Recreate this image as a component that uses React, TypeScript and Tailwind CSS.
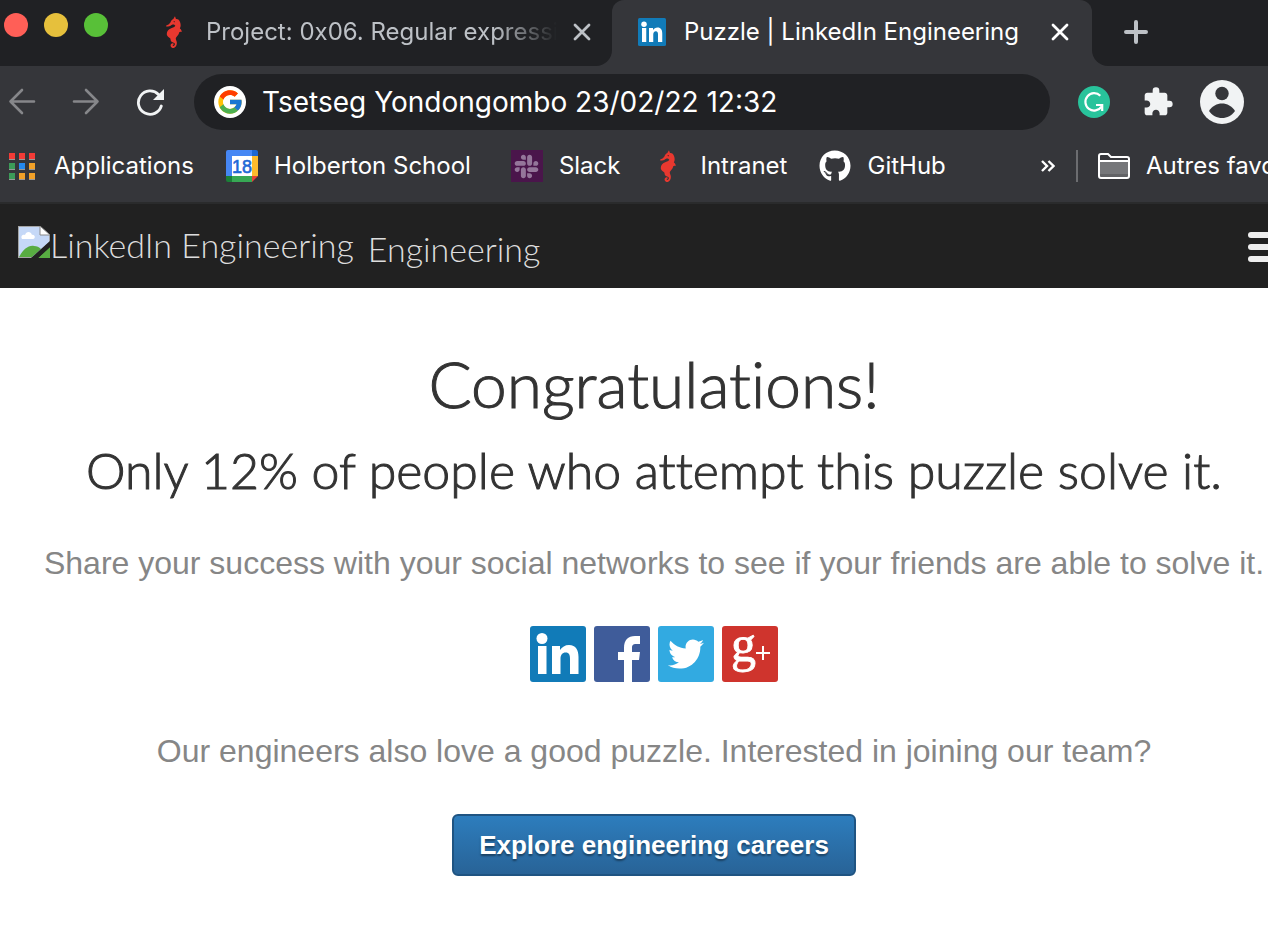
import React from "react";
import { FcGoogle } from "react-icons/fc";
import { FaGithub, FaSlack, FaTwitter } from "react-icons/fa";
import { MdExtension } from "react-icons/md";

function Seahorse() {
  return (
    <svg viewBox="0 0 48 98" className="h-8 w-4 shrink-0" fill="#e8382f" aria-hidden="true">
      <path d="M27 1l3 8c5-1 9 2 11 6 3 5 4 11 3 17l-2 6c3 2 5 5 6 11-4-2-6-1-8 1-1 7-5 10-9 15-3 4-1 6 0 10 3 5 2 13-1 18-3 5-10 7-14 3-4-4-3-10 2-12 3-1 6 1 6 4-2-1-4 0-4 2s3 2 5 0c3-3 2-7-2-8-4-2-8-3-9-7-1-3 0-5-2-7-4-3-9-5-10-11C1 47 7 41 14 38c7-2 13-4 14-8-3-5-7-5-10-3-4 3-9 6-14 5l-3 1-1-4c5-1 10-4 13-9 2-6 5-9 9-11z" />
      <path d="M22 17c2-3 5-2 5 1-1 2-4 2-5-1z" fill="#5b2224" />
    </svg>
  );
}

function LinkedInMark({ className }: { className: string }) {
  return (
    <svg viewBox="0 0 56 56" className={className} aria-hidden="true">
      <rect width="56" height="56" rx="3" fill="#117bb8" />
      <g fill="#fff">
        <circle cx="12" cy="12.500" r="5.500" />
        <path d="M8 20h8.500v28H8zM22 20h8v4c2-3 5-5 9-5 7 0 9.500 5 9.500 12v17H40V33c0-4-.8-6.500-4.300-6.500S30.500 29 30.500 33v15H22z" />
      </g>
    </svg>
  );
}

function Cross({ className }: { className: string }) {
  return (
    <svg viewBox="0 0 18 18" className={className} fill="none" stroke="currentColor" strokeWidth="2.800" strokeLinecap="round" aria-hidden="true">
      <path d="M2 2l14 14M16 2L2 16" />
    </svg>
  );
}

function AppsIcon() {
  const colors = ["#f23b36", "#f23b36", "#f23b36", "#3b9b58", "#2489ee", "#f0a028", "#3b9b58", "#f0a028", "#f0a028"];
  return (
    <svg viewBox="0 0 26 27" className="h-[27px] w-[26px]" aria-hidden="true">
      {colors.map((c, i) => (
        <g key={i}>
          <rect x={(i % 3) * 10} y={Math.floor(i / 3) * 10} width="6" height="7" fill="#9a9a9a" />
          <rect x={(i % 3) * 10} y={Math.floor(i / 3) * 10} width="6" height="6" fill={c} />
        </g>
      ))}
    </svg>
  );
}

function CalendarIcon() {
  return (
    <svg viewBox="0 0 32 32" className="size-8" aria-hidden="true">
      <path d="M2 0h24v6H6v20H0V2a2 2 0 012-2z" fill="#4687f4" />
      <path d="M26 0h4a2 2 0 012 2v4h-6z" fill="#1c67d2" />
      <path d="M26 6h6v20h-6z" fill="#fcbb2d" />
      <path d="M6 26h20v6H6z" fill="#37a854" />
      <path d="M0 26h6v6H2a2 2 0 01-2-2z" fill="#1b8038" />
      <path d="M26 26h6l-6 6z" fill="#e94335" />
      <path d="M6 6h20v20H6z" fill="#fff" />
      <text x="16" y="22.500" textAnchor="middle" fontSize="18" fill="#1f69d6" stroke="#1f69d6" strokeWidth=".6" fontFamily="Liberation Sans, sans-serif">18</text>
    </svg>
  );
}

function FolderIcon() {
  return (
    <svg viewBox="0 0 32 26" className="h-[26px] w-8" aria-hidden="true">
      <path d="M1 8h30v16.500H1z" fill="#76777a" />
      <path d="M2 21h28v3H2z" fill="#626366" />
      <path d="M1 3a2 2 0 012-2h7l3 3h16a2 2 0 012 2v17a2 2 0 01-2 2H3a2 2 0 01-2-2zM1 8h30" fill="none" stroke="#fff" strokeWidth="2" />
    </svg>
  );
}

function BrokenImage() {
  return (
    <svg viewBox="0 0 32 32" className="size-8" aria-hidden="true">
      <path d="M0 0h22l10 9v7L16 32H0z" fill="#a5a5a5" />
      <path d="M1 1h21v8h9v7L15 31H1z" fill="#c5d8f7" />
      <path d="M4 13c-2-4 2-5 3-4 1-4 6-4 7 0 3-1 4 4 1 4z" fill="#fff" />
      <path d="M1 31c4-7 9-12 15-11 3 0 5 1 7 3l-9 8z" fill="#58ac42" />
      <path d="M32 21v11H20z" fill="#58ac42" />
      <path d="M13 32h7L32 21v-6z" fill="#212121" />
      <path d="M22 0l10 9H22z" fill="#fff" stroke="#888" strokeWidth="1" />
    </svg>
  );
}

function Bookmark({ icon, label }: { icon: React.ReactNode; label: string }) {
  return (
    <a href="#" className="flex shrink-0 items-center gap-4">
      <span className="flex w-8 justify-center">{icon}</span>
      {label}
    </a>
  );
}

function TabStrip() {
  return (
    <div className="flex h-[66px] bg-[#35363a] text-[24px]">
      <div className="flex w-[612px] shrink-0 items-start rounded-br-2xl bg-[#202124]">
        <div className="flex gap-4 pt-[13px] pl-1">
          <span className="size-6 rounded-full bg-[#ff5f57]" />
          <span className="size-6 rounded-full bg-[#e6c03c]" />
          <span className="size-6 rounded-full bg-[#58c038]" />
        </div>
        <div className="flex h-16 min-w-0 flex-1 items-center pr-[21px] pl-[58px] text-[#bdc1c6]">
          <Seahorse />
          <button type="button" className="ml-6 min-w-0 flex-1 overflow-hidden text-left whitespace-nowrap [mask-image:linear-gradient(to_right,black_82%,transparent)]">
            Project: 0x06. Regular expressions
          </button>
          <button type="button" aria-label="Close tab" className="ml-4">
            <Cross className="size-[18px]" />
          </button>
        </div>
      </div>
      <div className="w-[480px] shrink-0 bg-linear-to-b from-[#202124] from-50% to-[#35363a] to-50%">
        <div className="flex h-full items-center rounded-t-xl bg-[#35363a] pr-[23px] pb-[2px] pl-[26px] text-white">
          <LinkedInMark className="size-7" />
          <button type="button" className="ml-[18px] flex-1 text-left whitespace-nowrap">Puzzle | LinkedIn Engineering</button>
          <button type="button" aria-label="Close tab">
            <Cross className="size-[18px]" />
          </button>
        </div>
      </div>
      <div className="flex flex-1 items-center rounded-bl-2xl bg-[#202124] pb-[2px] pl-8">
        <button type="button" aria-label="New tab" className="text-[#bdc1c6]">
          <svg viewBox="0 0 24 24" className="size-6" stroke="currentColor" strokeWidth="4" strokeLinecap="round" aria-hidden="true">
            <path d="M12 2v20M2 12h20" />
          </svg>
        </button>
      </div>
    </div>
  );
}

function Toolbar() {
  return (
    <div className="flex h-[72px] items-center bg-[#35363a] pr-6 pl-2 text-[#f1f3f4]">
      <button type="button" aria-label="Back" className="text-[#86878a]">
        <svg viewBox="0 0 28 28" className="size-7" fill="none" stroke="currentColor" strokeWidth="2.600" strokeLinecap="round" strokeLinejoin="round" aria-hidden="true">
          <path d="M26 13.500H2.500M14 2L2.500 13.500 14 25" />
        </svg>
      </button>
      <button type="button" aria-label="Forward" className="ml-9 text-[#86878a]">
        <svg viewBox="0 0 28 28" className="size-7" fill="none" stroke="currentColor" strokeWidth="2.600" strokeLinecap="round" strokeLinejoin="round" aria-hidden="true">
          <path d="M2 13.500h23.500M14 2l11.500 11.500L14 25" />
        </svg>
      </button>
      <button type="button" aria-label="Reload" className="ml-9">
        <svg viewBox="0 0 28 28" className="size-7" aria-hidden="true">
          <path d="M22.500 6.500A11.700 11.700 0 1025.300 18" fill="none" stroke="currentColor" strokeWidth="2.800" strokeLinecap="round" />
          <path d="M28 1v11H17z" fill="currentColor" />
        </svg>
      </button>
      <label className="ml-[30px] flex h-14 min-w-0 flex-1 items-center gap-4 rounded-full bg-[#202124] px-5">
        <span className="flex size-8 shrink-0 items-center justify-center rounded-full bg-white">
          <FcGoogle size={28} />
        </span>
        <input aria-label="Address" defaultValue="Tsetseg Yondongombo 23/02/22 12:32" className="min-w-0 flex-1 bg-transparent text-[28px] text-white outline-none" />
      </label>
      <button type="button" aria-label="Grammarly" className="ml-7">
        <svg viewBox="0 0 32 32" className="size-8" aria-hidden="true">
          <circle cx="16" cy="16" r="16" fill="#28c39b" />
          <path d="M22.300 9.800A8.700 8.700 0 1023.500 20.500" fill="none" stroke="#fff" strokeWidth="2.200" />
          <path d="M18 19h6.200v6" fill="none" stroke="#fff" strokeWidth="2.200" />
        </svg>
      </button>
      <button type="button" aria-label="Extensions" className="ml-8">
        <MdExtension size={32} />
      </button>
      <button type="button" aria-label="Profile" className="ml-[26px]">
        <svg viewBox="0 0 44 44" className="size-11" aria-hidden="true">
          <circle cx="22" cy="22" r="22" fill="#f1f3f4" />
          <circle cx="22" cy="13.500" r="6.700" fill="#35363a" />
          <path d="M9 31c3-5 8-7.500 13-7.500S32 26 35 31c-3 4.500-8 7-13 7s-10-2.500-13-7z" fill="#35363a" />
        </svg>
      </button>
    </div>
  );
}

function BookmarksBar() {
  return (
    <nav aria-label="Bookmarks" className="flex h-[66px] items-center overflow-hidden border-b-2 border-[#2a2b2c] bg-[#35363a] pb-2 pl-[6px] text-[24px] whitespace-nowrap text-white">
      <div className="flex flex-1 items-center gap-10">
        <div className="flex items-center gap-8">
          <Bookmark icon={<AppsIcon />} label="Applications" />
          <Bookmark icon={<CalendarIcon />} label="Holberton School" />
        </div>
        <div className="flex items-center gap-8">
          <Bookmark
            icon={
              <span className="flex size-8 shrink-0 items-center justify-center bg-[#4a154b] text-[#94769a]">
                <FaSlack size={27} />
              </span>
            }
            label="Slack"
          />
          <Bookmark icon={<Seahorse />} label="Intranet" />
          <Bookmark icon={<FaGithub size={32} />} label="GitHub" />
        </div>
      </div>
      <button type="button" aria-label="More bookmarks">
        <svg viewBox="0 0 14 14" className="size-[14px]" fill="none" stroke="currentColor" strokeWidth="2.400" aria-hidden="true">
          <path d="M1 2l5 5-5 5M7.500 2l5 5-5 5" />
        </svg>
      </button>
      <div className="ml-[21px] h-8 w-[2px] bg-[#6c6d70]" />
      <div className="ml-5 w-[170px] shrink-0">
        <Bookmark icon={<FolderIcon />} label="Autres favoris" />
      </div>
    </nav>
  );
}

function SiteHeader() {
  return (
    <header className="flex h-[84px] items-center overflow-hidden bg-[#212121] pl-[18px] font-['Lato',sans-serif] text-[34px] font-light text-[#ddd]">
      <a href="#" className="flex flex-1 items-center gap-[14px]">
        <span className="flex items-center pb-1">
          <span className="pb-1"><BrokenImage /></span>
          LinkedIn Engineering
        </span>
        <span className="pt-1">Engineering</span>
      </a>
      <button type="button" aria-label="Menu" className="-mr-5 flex shrink-0 flex-col gap-[6px] pt-[2px]">
        <span className="h-[6px] w-10 rounded-full bg-[#eee]" />
        <span className="h-[6px] w-10 rounded-full bg-[#eee]" />
        <span className="h-[6px] w-10 rounded-full bg-[#eee]" />
      </button>
    </header>
  );
}

function ShareLinks() {
  return (
    <div className="mt-10 flex gap-2">
      <a href="#" aria-label="Share on LinkedIn">
        <LinkedInMark className="size-14" />
      </a>
      <a href="#" aria-label="Share on Facebook" className="size-14 overflow-hidden rounded-[3px] bg-[#3f5c9a] text-white">
        <svg viewBox="0 0 56 56" className="size-14" fill="currentColor" aria-hidden="true">
          <path d="M30 56V34h-6v-8h6v-4c0-8 4-12 11-12h5v8h-4c-3 0-4 1-4 4v4h8l-1 8h-7v22z" />
        </svg>
      </a>
      <a href="#" aria-label="Share on Twitter" className="flex size-14 items-center justify-center rounded-[3px] bg-[#32aae1] text-white">
        <FaTwitter size={36} />
      </a>
      <a href="#" aria-label="Share on Google Plus">
        <svg viewBox="0 0 56 56" className="size-14" aria-hidden="true">
          <rect width="56" height="56" rx="3" fill="#cf342d" />
          <text x="9" y="35" fontSize="50" fill="#fff" stroke="#fff" strokeWidth=".8" fontFamily="Liberation Serif, serif">g</text>
          <path d="M34 27h14M41 20v14" stroke="#fff" strokeWidth="2" />
        </svg>
      </a>
    </div>
  );
}

export default function App() {
  return (
    <div className="min-h-screen overflow-hidden bg-white font-['Inter',sans-serif]">
      <TabStrip />
      <Toolbar />
      <BookmarksBar />
      <SiteHeader />
      <main className="flex flex-col items-center pt-14 pl-10 text-center font-['Liberation_Sans',sans-serif] text-[#333]">
        <h1 className="font-['Lato',sans-serif] text-[64px] leading-[80px] font-light [font-variant-ligatures:none] [-webkit-text-stroke:1px_#333]">Congratulations!</h1>
        <h2 className="mt-2 font-['Lato',sans-serif] text-[50px] leading-[76px] font-light whitespace-nowrap [font-variant-ligatures:none] [-webkit-text-stroke:1px_#333]">Only 12% of people who attempt this puzzle solve it.</h2>
        <p className="mt-8 text-[32px] leading-[46px] whitespace-nowrap text-[#868686]">Share your success with your social networks to see if your friends are able to solve it.</p>
        <ShareLinks />
        <p className="mt-[46px] text-[32px] leading-[46px] whitespace-nowrap text-[#868686]">Our engineers also love a good puzzle. Interested in joining our team?</p>
        <a href="#" className="mt-10 flex h-[62px] items-center rounded-[6px] border-2 border-[#1f5482] bg-linear-to-b from-[#2d7dbd] to-[#286397] px-[25px] text-[26px] font-bold text-white [text-shadow:0_2px_2px_rgba(0,0,0,0.4)]">
          Explore engineering careers
        </a>
      </main>
    </div>
  );
}
